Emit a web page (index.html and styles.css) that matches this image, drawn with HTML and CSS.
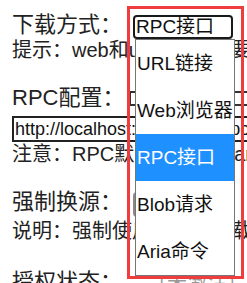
FILE: index.html
```html
<!DOCTYPE html>
<html lang="zh-CN">
<head>
    <meta charset="UTF-8">
    <meta name="viewport" content="width=device-width, initial-scale=1.0">
    <title>下载设置</title>
    <link rel="stylesheet" href="styles.css">
</head>
<body>
    <div class="panel">
        <div class="section">
            <div class="row">
                <span class="label">下载方式：</span>
                <div class="select current">RPC接口</div>
            </div>
            <div class="note">提示：web和url方式不需要额外配置</div>
        </div>

        <div class="section">
            <div class="row">
                <span class="label">RPC配置：</span>
                <div class="token-box"></div>
            </div>
            <input class="url-input" type="text" value="http://localhost:16800/jsonrpc">
            <div class="note">注意：RPC默认对接本地aria2下载器</div>
        </div>

        <div class="section">
            <div class="row">
                <span class="label">强制换源：</span>
                <div class="select muted"></div>
            </div>
            <div class="note note-tall">说明：强制使用选定的下载方式，跳过检测</div>
        </div>

        <div class="section">
            <div class="row">
                <span class="label">授权状态：</span>
                <span class="status">（未激活）</span>
                <a class="buy" href="#">✓购买授权</a>
            </div>
        </div>
    </div>

    <!-- opened dropdown of the first select -->
    <ul class="dropdown">
        <li>URL链接</li>
        <li>Web浏览器</li>
        <li class="selected">RPC接口</li>
        <li>Blob请求</li>
        <li>Aria命令</li>
    </ul>

    <!-- annotation frame -->
    <div class="highlight"></div>
</body>
</html>
```

FILE: styles.css
```css
html, body {
    overflow: hidden;
}
body {
    margin: 0;
    padding: 0;
    background-color: #fff;
    color: #222;
    font-family: "Liberation Sans", "Noto Sans CJK SC", sans-serif;
}
.panel {
    padding: 11px 0 0 12px;
}
.section {
    margin-bottom: 22px;
}
.row {
    display: flex;
    align-items: flex-end;
    height: 28px;
    white-space: nowrap;
}
.label {
    flex: none;
    width: 121px;
    font-size: 22px;
    line-height: 28px;
}
.select {
    flex: none;
    box-sizing: border-box;
    width: 100px;
    height: 24px;
    padding-left: 1px;
    border: 2px solid #1a1a1a;
    border-radius: 4px;
    font-size: 19px;
    line-height: 20px;
    color: #111;
}
.select.muted {
    height: 25px;
    border-color: #8a8a8a;
    margin-bottom: -1px;
}
.token-box {
    flex: none;
    align-self: center;
    box-sizing: border-box;
    width: 140px;
    height: 15px;
    margin-left: -4px;
    border: 2px solid #333;
}
.note {
    font-size: 20px;
    line-height: 23px;
    white-space: nowrap;
}
.note-tall {
    line-height: 30px;
}
.url-input {
    display: block;
    box-sizing: border-box;
    width: 280px;
    height: 26px;
    margin: 4px 0 1px;
    padding: 0 1px;
    border: 2px solid #222;
    border-radius: 0;
    font-family: "Liberation Sans", sans-serif;
    font-size: 18px;
    color: #111;
    outline: none;
}
.status {
    margin-left: 14px;
    font-size: 20px;
    line-height: 28px;
    color: #999;
}
.buy {
    margin-left: 6px;
    font-size: 20px;
    line-height: 28px;
    color: #1a3ee8;
    text-decoration: none;
}
.dropdown {
    position: absolute;
    left: 135px;
    top: 39px;
    box-sizing: border-box;
    width: 100px;
    margin: 0;
    padding: 0;
    list-style: none;
    background-color: #fff;
    border: 1px solid #767676;
    font-size: 19px;
    color: #111;
}
.dropdown li {
    height: 47px;
    line-height: 47px;
    padding-left: 1px;
    white-space: nowrap;
}
.dropdown li.selected {
    background-color: #1e90ff;
    color: #fff;
}
.highlight {
    position: absolute;
    left: 127px;
    top: 6px;
    box-sizing: border-box;
    width: 117px;
    height: 273px;
    border: 3px solid #f03c3c;
}
```
